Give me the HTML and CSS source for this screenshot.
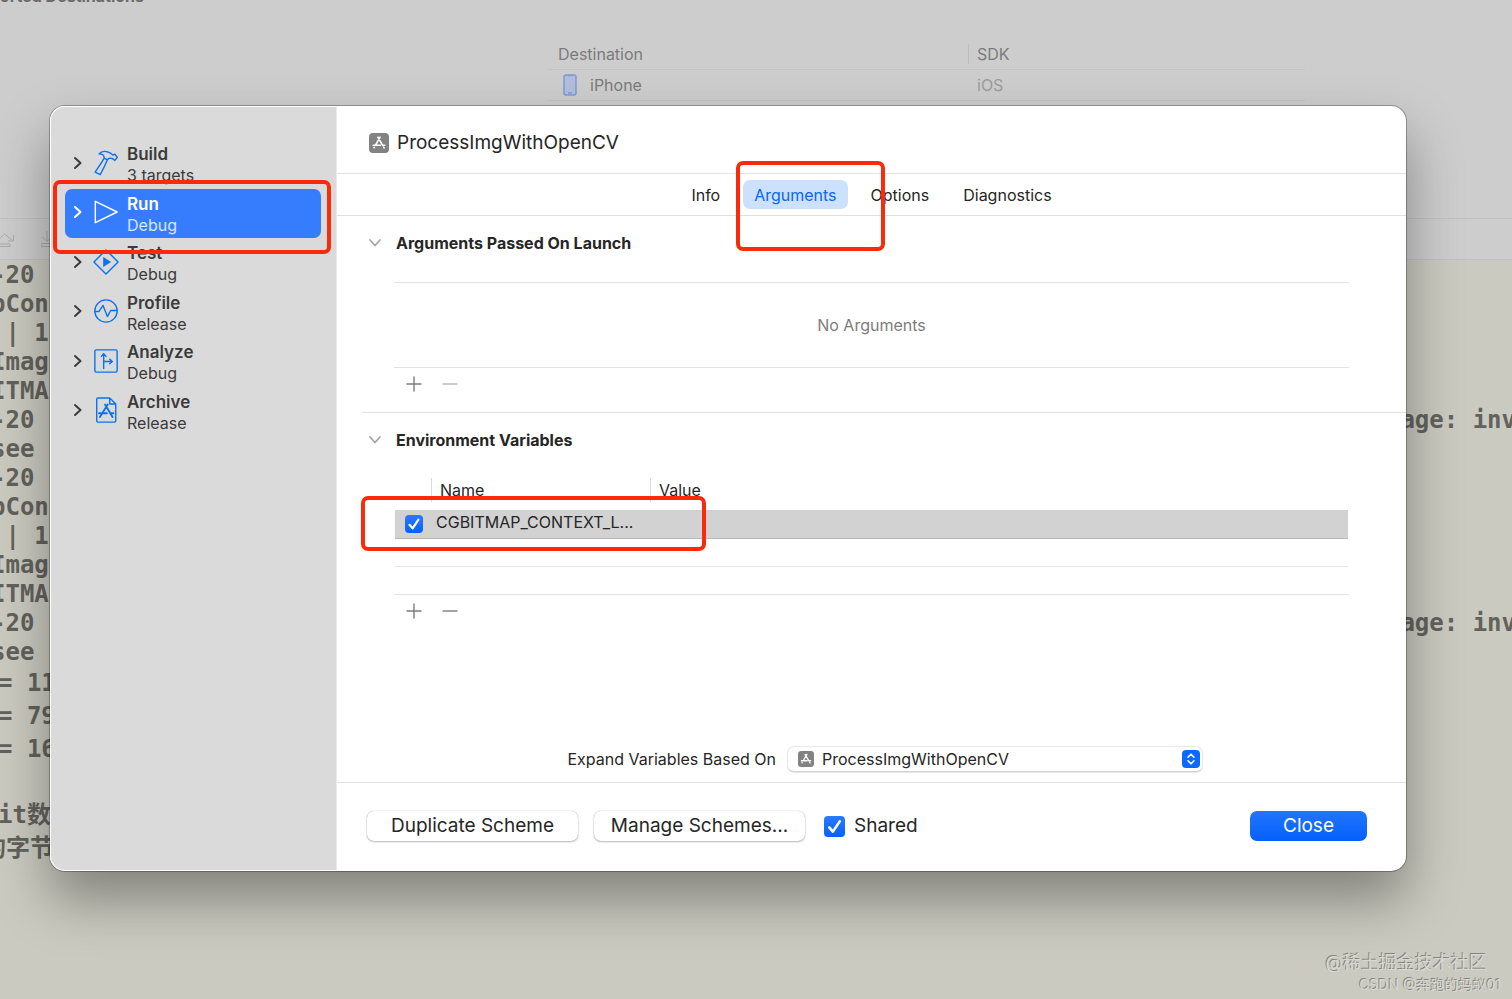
FILE: index.html
```html
<!DOCTYPE html>
<html lang="en">
<head>
<meta charset="utf-8">
<title>Edit Scheme</title>
<link rel="stylesheet" href="styles.css">
</head>
<body>
<svg class="symbols" aria-hidden="true">
  <symbol id="appstore" viewBox="0 0 20 20">
    <rect width="20" height="20" rx="4" fill="#828282"/>
    <g fill="none" stroke="#fff" stroke-width="1.6" stroke-linecap="round">
      <path d="M8.9 4.2 13.6 12.4M11.1 4.2 6.5 12.2M4.2 12.2H11.4M13.8 12.2H15.8M5.3 14.3 5 14.8M14.6 14.2 15.1 15"/>
    </g>
  </symbol>
  <symbol id="right" viewBox="0 0 10 14"><path d="M2 2 7.500 7 2 12" fill="none" stroke="currentColor" stroke-width="2" stroke-linecap="round" stroke-linejoin="round"/></symbol>
  <symbol id="down" viewBox="0 0 14 10"><path d="M2 2 7 7.500 12 2" fill="none" stroke="currentColor" stroke-width="1.800" stroke-linecap="round" stroke-linejoin="round"/></symbol>
  <symbol id="plus" viewBox="0 0 16 16"><path d="M8 .5V15.500M.5 8H15.500" fill="none" stroke="currentColor" stroke-width="1.400"/></symbol>
  <symbol id="minus" viewBox="0 0 16 16"><path d="M.5 8H15.500" fill="none" stroke="currentColor" stroke-width="1.400"/></symbol>
  <symbol id="tick" viewBox="0 0 18 18"><path d="M4.500 9.800 7.600 13.400 13.500 4.600" fill="none" stroke="#fff" stroke-width="2.200" stroke-linecap="round" stroke-linejoin="round"/></symbol>
</svg>

<div class="workspace">
  <section class="project">
    <h2 class="project-title">Supported Destinations</h2>
    <div class="destinations">
      <div class="dest-row dest-head"><span>Destination</span><span class="sdk">SDK</span></div>
      <div class="dest-row"><span class="device"><svg width="14" height="22" viewBox="0 0 14 22"><rect x="1" y="1" width="12" height="20" rx="2" fill="#b3bfda" stroke="#7f9bd8" stroke-width="1.500"/><path d="M4.500 1.500H9.500M5 19H9" stroke="#7f9bd8" stroke-width="1.500"/></svg>iPhone</span><span class="sdk dim">iOS</span></div>
    </div>
  </section>
  <div class="debugbar">
    <svg width="15" height="18" viewBox="0 0 15 18"><path d="M-4 12 4.500 4 12 10M13.500 5V11H8M-4 14H10V16.500H-4" /></svg>
    <svg width="15" height="18" viewBox="0 0 15 18"><path d="M6 1V11M1.500 7 6 11.500 11 7M0 13.500H14V16.500H0Z" /></svg>
  </div>
  <div class="console">
    <div class="log">
      <p><span>-20 </span></p>
      <p><span>pCon</span></p>
      <p><span> | 1</span></p>
      <p><span>Imag</span></p>
      <p><span>ITMA</span></p>
      <p><span>-20 </span><span>age: inv</span></p>
      <p><span>see </span></p>
      <p><span>-20 </span></p>
      <p><span>pCon</span></p>
      <p><span> | 1</span></p>
      <p><span>Imag</span></p>
      <p><span>ITMA</span></p>
      <p><span>-20 </span><span>age: inv</span></p>
      <p><span>see </span></p>
    </div>
    <div class="log values">
      <p>= 11</p>
      <p>= 79</p>
      <p>= 16</p>
      <p> </p>
      <p>it数</p>
      <p class="wide">的字节</p>
    </div>
  </div>
</div>

<div class="overlay">
  <main class="dialog" role="dialog" aria-label="Edit scheme">
    <nav class="sidebar">
      <ul class="actions">
        <li><button class="action" type="button">
          <svg class="chev" width="10" height="14"><use href="#right"/></svg>
          <svg class="icon" viewBox="0 0 26 28"><path d="M5.500 4.200C8.500 1 13.500.8 17.500 3.200L20.300 5.400 22.500 4.600 25.200 7.800 22.600 11.200 19.500 9 16.500 8.800 14.500 10.500C12.500 15.500 9.800 21 6.800 26.500L1.300 23.800C5 18.500 8.500 13.500 11 8.800 11.200 6 9.500 4.200 5.500 4.200ZM11 8.800 14.500 10.500"/></svg>
          <span class="label"><b>Build</b><span>3 targets</span></span>
        </button></li>
        <li><button class="action selected" type="button">
          <svg class="chev" width="10" height="14"><use href="#right"/></svg>
          <svg class="icon" viewBox="0 0 26 28"><path d="M1.500 2.500V25.500L25 14Z"/></svg>
          <span class="label"><b>Run</b><span>Debug</span></span>
        </button><i class="mark mark-run"></i></li>
        <li><button class="action" type="button">
          <svg class="chev" width="10" height="14"><use href="#right"/></svg>
          <svg class="icon icon-test" viewBox="0 0 28 28"><path d="M14 1 27 14 14 27 1 14Z"/><path class="solid" d="M11 8.500V19.500L19.500 14Z"/></svg>
          <span class="label"><b>Test</b><span>Debug</span></span>
        </button></li>
        <li><button class="action" type="button">
          <svg class="chev" width="10" height="14"><use href="#right"/></svg>
          <svg class="icon" viewBox="0 0 26 28"><circle cx="13" cy="14" r="12"/><path d="M1 14.500H5.500L9.800 8 14.500 20 18 13.500H25"/></svg>
          <span class="label"><b>Profile</b><span>Release</span></span>
        </button></li>
        <li><button class="action" type="button">
          <svg class="chev" width="10" height="14"><use href="#right"/></svg>
          <svg class="icon" viewBox="0 0 26 28"><rect x="1" y="2" width="24" height="24" rx="1.500"/><path d="M10.500 22V6.500M8 9 10.500 6 13 9M10.500 14.500H19.500M17 12 19.800 14.500 17 17"/></svg>
          <span class="label"><b>Analyze</b><span>Debug</span></span>
        </button></li>
        <li><button class="action" type="button">
          <svg class="chev" width="10" height="14"><use href="#right"/></svg>
          <svg class="icon" viewBox="0 0 26 28"><path d="M4.500 1H17L23.500 7.500V25.500Q23.500 27 22 27H4.500Q3 27 3 25.500V2.500Q3 1 4.500 1ZM17 1V7.500H23.500"/><path stroke-width="2" d="M12 8 20 21.500M14.800 8 6.500 21.500M5.500 17.500H14M17.500 17.500H21"/></svg>
          <span class="label"><b>Archive</b><span>Release</span></span>
        </button></li>
      </ul>
    </nav>

    <div class="pane">
      <header class="target"><svg width="20" height="20"><use href="#appstore"/></svg><h1>ProcessImgWithOpenCV</h1></header>
      <div class="tabs" role="tablist">
        <button type="button" role="tab">Info</button>
        <button type="button" role="tab" class="active" aria-selected="true">Arguments<i class="mark mark-tab"></i></button>
        <button type="button" role="tab">Options</button>
        <button type="button" role="tab">Diagnostics</button>
      </div>

      <div class="content">
        <section class="group">
          <h3><svg width="14" height="10"><use href="#down"/></svg>Arguments Passed On Launch</h3>
          <div class="empty">No Arguments</div>
          <div class="tools">
            <button type="button" aria-label="Add argument"><svg width="16" height="16"><use href="#plus"/></svg></button>
            <button type="button" aria-label="Remove argument" disabled><svg width="16" height="16"><use href="#minus"/></svg></button>
          </div>
        </section>
        <section class="group env">
          <h3><svg width="14" height="10"><use href="#down"/></svg>Environment Variables</h3>
          <div class="vars">
            <table>
              <colgroup><col class="c-on"><col class="c-name"><col></colgroup>
              <thead><tr><th></th><th><div>Name</div></th><th><div>Value</div></th></tr></thead>
              <tbody>
                <tr class="picked"><td><span class="check"><input type="checkbox" checked aria-label="Enable variable"><svg><use href="#tick"/></svg></span></td><td>CGBITMAP_CONTEXT_L...</td><td></td></tr>
                <tr><td></td><td></td><td></td></tr>
              </tbody>
            </table>
            <i class="mark mark-row"></i>
          </div>
          <div class="tools">
            <button type="button" aria-label="Add variable"><svg width="16" height="16"><use href="#plus"/></svg></button>
            <button type="button" aria-label="Remove variable"><svg width="16" height="16"><use href="#minus"/></svg></button>
          </div>
        </section>
        <div class="expand">
          <label for="base">Expand Variables Based On</label>
          <div class="picker">
            <svg class="picker-app" width="16" height="16"><use href="#appstore"/></svg>
            <select id="base"><option>ProcessImgWithOpenCV</option></select>
            <svg class="picker-arrows" width="18" height="18" viewBox="0 0 18 18"><rect width="18" height="18" rx="4" fill="#0b69ff"/><path d="M6 7.200 9 4.200 12 7.200M6 10.800 9 13.800 12 10.800" fill="none" stroke="#fff" stroke-width="1.600" stroke-linecap="round" stroke-linejoin="round"/></svg>
          </div>
        </div>
      </div>

      <footer class="footer">
        <button type="button" class="btn">Duplicate Scheme</button>
        <button type="button" class="btn">Manage Schemes...</button>
        <label class="shared"><span class="check large"><input type="checkbox" checked><svg><use href="#tick"/></svg></span>Shared</label>
        <button type="button" class="btn primary">Close</button>
      </footer>
    </div>
  </main>
</div>

<div class="watermark"><p class="wm-a">@稀土掘金技术社区</p><p class="wm-b">CSDN @奔跑的蚂蚁01</p></div>
</body>
</html>
```
FILE: styles.css
```css
* { box-sizing: border-box; }
body { margin: 0; overflow: hidden; background: #cbcac0; color: #262626; font: 16px/20px Inter, "Noto Sans CJK SC", sans-serif; }
h1, h2, h3, p, ul { margin: 0; padding: 0; font: inherit; }
button { margin: 0; padding: 0; border: 0; background: none; color: inherit; font: inherit; }
.symbols { position: absolute; width: 0; height: 0; }

/* Window behind the dialog */
.workspace { display: flex; flex-direction: column; min-height: 100vh; overflow: hidden; }
.project { height: 218px; background: #cdcdcd; color: #7b7b7b; }
.project-title { display: flex; justify-content: flex-end; width: 144px; height: 6px; line-height: 20px; align-items: flex-end; font-weight: 700; white-space: nowrap; color: #6b6b6b; }
.destinations { margin: 33px 207px 0 548px; }
.dest-row { display: grid; grid-template-columns: 420px 1fr; align-items: center; height: 31px; padding-left: 10px; border-bottom: 1px solid #c3c3c3; }
.dest-row .sdk { margin-left: -10px; padding-left: 9px; }
.dest-head .sdk { padding-left: 8px; border-left: 1px solid #bdbdbd; }
.dim { color: #9c9c9c; }
.device { display: flex; align-items: center; gap: 13px; padding-left: 5px; }
.debugbar { display: flex; gap: 26px; align-items: center; height: 42px; border: solid #c0c0c0; border-width: 1px 0; background: #cdcdcd; }
.debugbar svg { fill: none; stroke: #a9a9a9; stroke-width: 1; }
.console { flex: 1; padding-top: 1px; background: #cbcac0; color: #62625d; font: 700 24px/29px "DejaVu Sans Mono", "Noto Sans CJK SC", monospace; }
.log { margin: 0 -4px 0 -9px; }
.log p { display: flex; justify-content: space-between; height: 29px; white-space: pre; }
.log.values { margin-left: -2px; font-size: 24px; line-height: 33px; }
.log.values p { height: 33px; }
.log.values .wide { margin-left: -16px; }

/* Dialog */
.overlay { position: absolute; inset: 0; padding: 106px 106px 128px 50px; display: flex; }
.dialog { flex: 1; display: flex; border-radius: 15px; background: #fff; box-shadow: 0 0 0 1px rgba(0, 0, 0, .28), 0 28px 54px rgba(0, 0, 0, .36); }
.sidebar { width: 287px; padding: 32px 15px 0 14px; border: 1px solid #fff; border-right-color: #ececec; border-radius: 15px 0 0 15px; background: #dadada; }
.actions { display: grid; grid-auto-rows: 1fr; height: 297px; list-style: none; }
.actions li { position: relative; }
.action { display: flex; align-items: center; width: 100%; height: 49px; padding: 0 0 2px 8px; border-radius: 7px; text-align: left; color: #3b3b3b; }
.action .chev { margin-right: 10px; }
.icon { width: 26px; height: 26px; margin-right: 8px; fill: none; stroke: #0a72ef; stroke-width: 1.5; stroke-linejoin: round; stroke-linecap: round; }
.icon .solid { fill: #0a72ef; stroke: none; }
.label { display: grid; grid-auto-rows: 21px; padding-top: 5px; line-height: 21px; }
.label b { font-size: 17px; font-weight: 600; }
.selected { background: #367dfd; color: #fff; }
.selected .icon { stroke: #fff; }
.selected .label span { color: #d9e6ff; }

.mark { position: absolute; z-index: 2; border: 4px solid #fb2a0b; border-radius: 7px; pointer-events: none; }
.mark-run { inset: -9px -10px -16px -12px; }
.mark-tab { inset: -19px -37px -42px -7px; }
.mark-row { left: -33px; top: 18px; width: 345px; height: 55px; }

.pane { flex: 1; display: flex; flex-direction: column; min-width: 0; }
.target { display: flex; align-items: center; gap: 8px; height: 68px; padding: 6px 32px 0; border-bottom: 1px solid #e3e3e3; }
.target h1 { font-size: 19px; line-height: 24px; }
.tabs { display: flex; justify-content: center; align-items: center; gap: 12px; height: 42px; border-bottom: 1px solid #e0e0e0; }
.tabs button { position: relative; height: 29px; padding: 0 11px; border-radius: 7px; }
.tabs .active { background: #cbe1ff; color: #0a66ee; }

.content { flex: 1; display: flex; flex-direction: column; padding: 0 0 10px 25px; }
.group { padding: 16px 57px 0 32px; border-bottom: 1px solid #e3e3e3; }
.group.env { border-bottom: 0; }
.group h3 { display: flex; align-items: center; gap: 14px; height: 22px; margin-left: -26px; font-weight: 700; }
.group h3 svg { color: #a5a5a5; }
.env h3 { margin-bottom: 27px; }
.empty { display: grid; place-items: center; height: 86px; margin-top: 28px; border: solid #e3e3e3; border-width: 1px 0; color: #7c7c7c; }
.tools { display: flex; align-items: center; gap: 20px; height: 32px; padding-left: 12px; color: #7c7c7c; }
.group:first-child .tools { height: 44px; padding-bottom: 12px; }
.tools button { display: flex; }
.tools button:disabled { color: #b5b5b5; }
.vars { position: relative; height: 117px; border-bottom: 1px solid #e3e3e3; padding: 0 1px; }
table { width: 100%; table-layout: fixed; border-collapse: collapse; }
.c-on { width: 36px; }
.c-name { width: 219px; }
th { height: 32px; padding: 0; text-align: left; vertical-align: top; font-weight: 400; }
th div { height: 24px; line-height: 24px; padding-left: 8px; border-left: 1px solid #dcdcdc; }
td { height: 28px; padding: 0 0 4px 5px; border-bottom: 1px solid #e6e6e6; line-height: 20px; white-space: nowrap; }
td:first-child { padding: 0 0 0 10px; }
.picked { background: #d2d2d2; }
.picked td { border-color: #b9b9b9; }
.check { position: relative; display: block; width: 18px; height: 18px; }
.check input { display: block; appearance: none; width: 100%; height: 100%; margin: 0; border-radius: 4px; background: linear-gradient(#2a7bff, #0560fa); }
.check svg { position: absolute; inset: 0; width: 100%; height: 100%; pointer-events: none; }
.check.large { width: 21px; height: 21px; }

.expand { display: flex; align-items: center; gap: 11px; margin: auto 203px 0 auto; }
.picker { position: relative; width: 416px; }
.picker select { display: block; appearance: none; width: 100%; height: 26px; padding: 0 34px; border: 1px solid #e8e8e8; border-bottom-color: #d2d2d2; border-radius: 7px; background: #fff; box-shadow: 0 1px 1px rgba(0, 0, 0, .1); color: inherit; font: inherit; }
.picker svg { position: absolute; top: 5px; pointer-events: none; }
.picker .picker-app { left: 11px; }
.picker .picker-arrows { right: 3px; top: 4px; }
.footer { display: flex; align-items: center; gap: 16px; height: 89px; padding: 0 39px 2px 30px; border-top: 1px solid #e3e3e3; font-size: 19px; line-height: 24px; }
.btn { width: 211px; height: 30px; border-radius: 7px; background: #fff; box-shadow: 0 0 1px rgba(0, 0, 0, .35), 0 1px 2px rgba(0, 0, 0, .25); }
.shared { display: flex; align-items: center; gap: 9px; margin-left: 3px; }
.primary { width: 117px; margin-left: auto; background: linear-gradient(#2176ff, #0560fa); color: #fff; box-shadow: none; }

.watermark { position: absolute; right: 11px; bottom: 4px; text-align: right; color: #d8d8d2; text-shadow: -1px -1px 0 #85857f; }
.wm-a { margin-right: 14px; font-size: 18px; line-height: 24px; }
.wm-b { font-size: 14px; line-height: 20px; }
```
